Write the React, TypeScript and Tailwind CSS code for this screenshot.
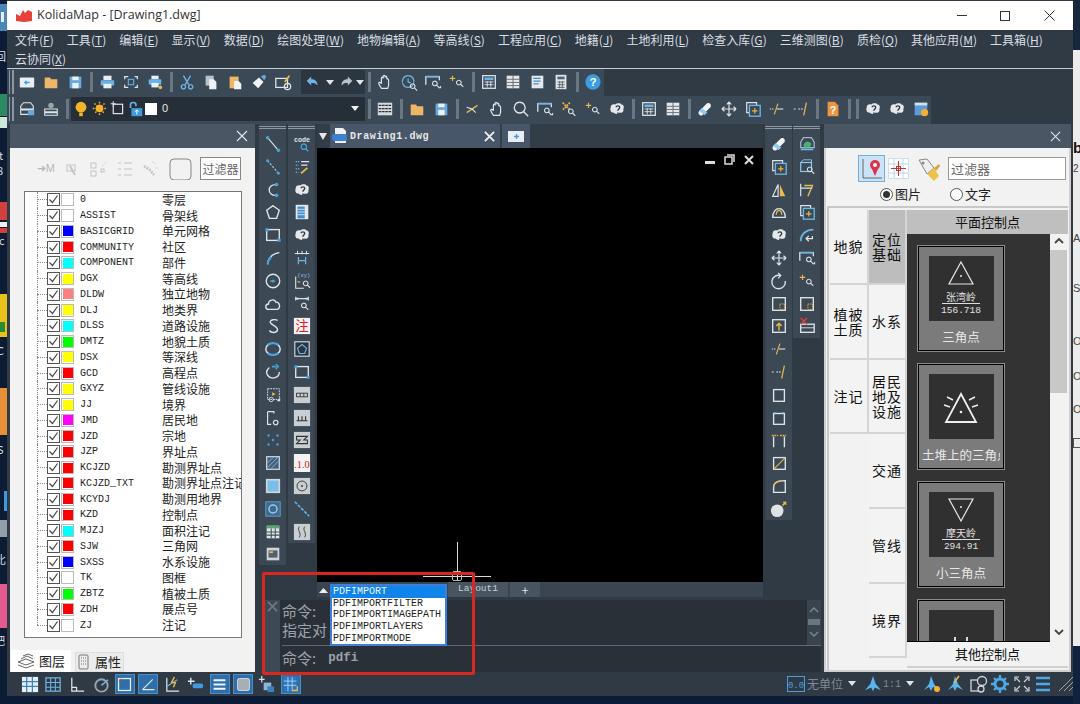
import React from "react";

const B = "#43a5e0";
const W = "#dfe5ea";
const Y = "#e8b84a";
const G = "#9aa5ae";

const P = { fill: "none", stroke: W, strokeWidth: 1.5 } as const;

const cloudQ = (
  <>
    <path d="M3 8c0-3 3-4 5-3 2-2 6-2 7 0 3 0 3 4 2 5 1 3-2 5-4 4-2 2-5 2-7 0-3 0-4-3-3-6z" fill="#e6e9ec" />
    <path d="M9 8c0-2 4-2 4 0s-2 2-2 4M11 14v1.5" fill="none" stroke="#2f3a46" strokeWidth="1.5" />
  </>
);

const zoomGlass = (x: number, y: number) => (
  <path d={`M${x} ${y}a2.6 2.6 0 1 0 .1 0M${x + 2} ${y + 4.5}l3 3`} fill="none" stroke={W} strokeWidth="1.2" />
);

const icons: Record<string, React.ReactNode> = {
  newf: <><rect x="2" y="5" width="16" height="11" rx="1" fill="#e9eef2" /><path d="M8 10.5h5M9.5 8.5l-2 2 2 2" stroke={B} strokeWidth="1.5" fill="none" /></>,
  folder: <path d="M3 5h6l1 2h7v10H3z" fill="#eeb667" />,
  save: <><rect x="4" y="4" width="13" height="13" fill="#67a9dd" /><rect x="7" y="4" width="7" height="4" fill="#eaf2f8" /><rect x="7" y="11" width="7" height="6" fill="#eaf2f8" /></>,
  print: <><rect x="6" y="3" width="9" height="5" fill="#e9eef2" /><rect x="3" y="8" width="15" height="6" rx="1" fill="#67b2e6" /><rect x="6" y="12" width="9" height="5" fill="#e9eef2" /></>,
  frame: <><path d="M3 7V4h4M14 4h3v3M17 13v3h-3M7 16H3v-3" fill="none" stroke={W} strokeWidth="1.4" /><rect x="7" y="7" width="6" height="6" fill="none" stroke="#67b2e6" strokeWidth="1.2" /></>,
  print2: <><rect x="6" y="3" width="8" height="4" fill="#e9eef2" /><rect x="3" y="7" width="14" height="6" rx="1" fill="#67b2e6" /><rect x="6" y="11" width="8" height="5" fill="#e9eef2" /><circle cx="16" cy="16" r="2" fill={Y} /></>,
  cut: <path d="M6 3l6 10M14 3L8 13M6 13a2.4 2.4 0 1 0 .1 0M14 13a2.4 2.4 0 1 0 .1 0" fill="none" stroke="#6eb5e5" strokeWidth="1.5" />,
  copy: <><rect x="4" y="3" width="9" height="11" fill="#b8c2ca" /><path d="M8 7h5l3 3v8H8z" fill="#f0f3f5" /></>,
  paste: <><rect x="4" y="4" width="10" height="13" fill="#eeb667" /><path d="M9 9h5l3 3v6H9z" fill="#f0f3f5" /></>,
  brush: <><path d="M3 11l7-6 5 5-6 7z" fill="#f0f3f5" /><path d="M12 4l4-2 2 2-2 4z" fill="#67a9dd" /></>,
  match: <><rect x="2" y="6" width="13" height="10" fill="none" stroke={W} strokeWidth="1.4" /><circle cx="15" cy="15" r="3.5" fill="none" stroke={W} strokeWidth="1.4" /><path d="M12 10l5-7" stroke={Y} strokeWidth="2" /></>,
  undo: <><path d="M8 4L3 9l5 5V11c3 0 5 0 7 3 0-5-3-7-7-7z" fill="#6eb5e5" /></>,
  redo: <path d="M12 4l5 5-5 5V11c-3 0-5 0-7 3 0-5 3-7 7-7z" fill="#b9c2ca" />,
  hand: <path d="M6 17c-2-3-3-5-3-6s2-1 3 1V6c0-2 2-2 2 0V4c0-2 2-2 2 0v1c0-2 2-2 2 0v2c0-1 2-1 2 1v5c0 2-1 3-1 4z" fill="none" stroke={W} strokeWidth="1.3" />,
  clockz: <><path d="M9 3a6.5 6.5 0 1 0 .1 0M9 6v4l3 1" fill="none" stroke="#6eb5e5" strokeWidth="1.4" />{zoomGlass(14, 12)}</>,
  rectz: <><path d="M2 13V4h15v4" fill="none" stroke={W} strokeWidth="1.4" /><path d="M2 4h15" stroke="#6eb5e5" strokeWidth="2" />{zoomGlass(12, 9)}<path d="M16 17h3v-3z" fill={W} /></>,
  starz: <><path d="M5 3v6M2 6h6" stroke={Y} strokeWidth="1.3" />{zoomGlass(12, 8)}</>,
  calc1: <><rect x="3" y="3" width="14" height="14" fill="none" stroke={W} strokeWidth="1.4" /><rect x="5" y="5" width="10" height="3" fill="#6eb5e5" /><path d="M5 10h10M5 13h10M8 9v7M12 9v7" stroke={W} strokeWidth="1" /></>,
  table: <><rect x="3" y="3" width="14" height="14" fill="#e5e8eb" /><path d="M3 7h14M3 10.5h14M3 14h14M10 3v14" stroke="#5d6872" strokeWidth="1" /></>,
  sheet: <><rect x="4" y="3" width="13" height="14" fill="#e5e8eb" /><path d="M6 6h8M6 9h8M6 12h6" stroke="#3f8ccb" strokeWidth="1.3" /></>,
  calc2: <><rect x="4" y="2" width="12" height="16" fill="#dfe5ea" /><rect x="6" y="4" width="8" height="3" fill="#56636e" /><path d="M6 10h8M6 13h8M6 16h8M8.5 9v8M11.5 9v8" stroke="#56636e" strokeWidth="1" /></>,
  help: <><circle cx="10" cy="10" r="8.5" fill="#3e9be0" /><text x="10" y="14.5" fontSize="13" fontWeight="700" textAnchor="middle" fill="#fff" fontFamily="Liberation Sans">?</text></>,
  layers1: <><path d="M3 7l3-4h8l3 4v3H3zM3 11h14v5H3z" fill="none" stroke={W} strokeWidth="1.2" /><rect x="11" y="11" width="7" height="6" fill="#67a9dd" /></>,
  layers2: <><circle cx="10" cy="6" r="3" fill={G} /><path d="M3 10h14v3H3zM3 14h14v3H3z" fill="none" stroke={W} strokeWidth="1.2" /></>,
  bulb: <><circle cx="10" cy="8" r="6" fill="#f3b42b" /><rect x="8" y="14" width="4" height="4" fill="#f3b42b" /></>,
  sun: <><circle cx="10" cy="10" r="4.5" fill="#f3b42b" /><path d="M10 2v16M2 10h16M4 4l12 12M16 4L4 16" stroke="#f3b42b" strokeWidth="1.6" strokeDasharray="2 1.4" /></>,
  newbox: <><rect x="5" y="5" width="11" height="11" fill="none" stroke={W} strokeWidth="1.4" /><path d="M5 1.5v6M2 4.5h6" stroke={W} strokeWidth="1.2" /></>,
  lock: <><path d="M5 9V5c0-3 6-3 6 0v2" fill="none" stroke="#6eb5e5" strokeWidth="1.8" /><rect x="6" y="9" width="12" height="9" fill="#3e9be0" /><path d="M12 11v5M10 13l2-2 2 2" stroke="#fff" strokeWidth="1.1" fill="none" /></>,
  lines: <><rect x="2" y="3" width="16" height="14" fill="#d5dade" /><path d="M3 6h14M3 9.5h14M3 13h14" stroke="#333" strokeWidth="1.4" strokeDasharray="3 .6" /></>,
  slashy: <><path d="M3 14L15 6" stroke={Y} strokeWidth="1.5" /><path d="M3 8l6 2 4 4" fill="none" stroke={W} strokeWidth="1.2" /></>,
  zoom: <path d="M8.5 2.5a6 6 0 1 0 .1 0M13 13l5 5" fill="none" stroke={W} strokeWidth="1.5" />,
  xz: <><path d="M3 3l8 8M11 3l-8 8" stroke={Y} strokeWidth="2" strokeDasharray="2 1" />{zoomGlass(12, 10)}</>,
  qcloud: cloudQ,
  grid2: <><rect x="2" y="3" width="16" height="14" fill="none" stroke={W} strokeWidth="1.4" /><rect x="3" y="4" width="14" height="3" fill="#67b2e6" /><path d="M3 10h14M3 13.5h14M8 7v10M13 7v10" stroke="#67b2e6" strokeWidth="1.2" /></>,
  eraser: <><path d="M3 13l9-9c2-2 6 1 4 4l-9 9c-2 1-5-1-4-4z" fill="#f0f4f7" /><path d="M3.500 12l3-3 6 5-3 3z" fill="#8fcaf0" /></>,
  move: <path d="M10 2v16M2 10h16M10 2L7.5 5M10 2l2.5 3M10 18l-2.5-3M10 18l2.5-3M2 10l3-2.5M2 10l3 2.5M18 10l-3-2.5M18 10l-3 2.5" fill="none" stroke={W} strokeWidth="1.3" />,
  copyp: <><path d="M6 14H3V3h11v3" fill="none" stroke={W} strokeWidth="1.3" /><rect x="6" y="6" width="12" height="12" fill="none" stroke="#6eb5e5" strokeWidth="1.5" /><path d="M12 9v6M9 12h6" stroke={Y} strokeWidth="1.3" /></>,
  ext1: <><path d="M7 16L11 4" stroke={Y} strokeWidth="1.3" /><path d="M2 10h5" stroke={W} strokeWidth="1.2" strokeDasharray="1.500 1" /><path d="M10 10h7" stroke={W} strokeWidth="1.2" /></>,
  ext2: <><path d="M2 10h3M7 10h6" stroke={W} strokeWidth="1.2" strokeDasharray="2 1" /><path d="M16 3l-3 14" stroke={Y} strokeWidth="1.4" /></>,
  qdoc: <><path d="M4 2h8l4 4v12H4z" fill="#ec9440" /><text x="10" y="15" fontSize="12" fontWeight="700" textAnchor="middle" fill="#fff" fontFamily="Liberation Sans">?</text></>,
  gear: <><rect x="3" y="3" width="14" height="14" fill="#5f9bd6" /><rect x="3" y="3" width="14" height="3" fill="#cfe2f1" /><circle cx="14" cy="14" r="4" fill="#f2b132" /></>,
  line: <><path d="M4 3l12 14" stroke={W} strokeWidth="1.2" /><circle cx="4" cy="3" r="2" fill={B} /><circle cx="16" cy="17" r="2" fill={B} /></>,
  dline: <><path d="M4 3l12 14" stroke="#8fcaf0" strokeWidth="1.4" strokeDasharray="2.5 1.5" /><circle cx="4" cy="3" r="1.6" fill={B} /><circle cx="16" cy="17" r="1.6" fill={B} /></>,
  cc: <><path d="M14 4c-11-1-11 13 0 12" {...P} /><circle cx="14" cy="4" r="2" fill={B} /><circle cx="14" cy="16" r="2" fill={B} /></>,
  penta: <path d="M10 3l7 5-3 9H6L3 8z" {...P} />,
  rect: <><rect x="3" y="4" width="14" height="12" {...P} /><rect x="1.5" y="2.5" width="3.5" height="3.5" fill={B} /><rect x="15" y="14" width="3.5" height="3.5" fill={B} /></>,
  arc: <><path d="M4 17C5 9 10 5 17 4" stroke={W} strokeWidth="1.5" fill="none" /><path d="M4 17C4.500 13 6 10.500 8 9" stroke={B} strokeWidth="2.400" fill="none" /></>,
  circle: <><circle cx="10" cy="10" r="7.5" {...P} /><path d="M7 10h5" stroke={B} strokeWidth="1.8" /><circle cx="10" cy="10" r="1.800" fill={B} /></>,
  cloud: <path d="M5 16c-4 0-4-6 0-6 0-5 7-6 8-2 5-1 6 8 1 8z" {...P} />,
  sss: <path d="M15 4c-2-2-9-1-8 2s8 4 8 8-7 4-9 1" fill="none" stroke={W} strokeWidth="1.600" />,
  ell: <><ellipse cx="10" cy="10" rx="8" ry="6.500" fill="none" stroke={W} strokeWidth="1.600" /><path d="M4 5.500C6 3 14 3 16 5.500M4 14.500C6 17 14 17 16 14.500" fill="none" stroke={B} strokeWidth="2.400" /></>,
  earc: <><path d="M6 5C-1 11 6 19 13 16c3-1 4-4 4-6" {...P} /><path d="M9 4l5 0" stroke={B} strokeWidth="2" /><path d="M13 1l3 3-3 3" stroke={B} strokeWidth="1.500" fill="none" /></>,
  ins: <><rect x="4" y="3" width="13" height="12" fill="#404c58" stroke={W} strokeDasharray="2 1" /><circle cx="8" cy="15" r="2.400" fill="none" stroke={W} /><path d="M9 7l4 2-4 2z" fill={Y} /><path d="M14 17h4v-4z" fill={W} /></>,
  blk: <><path d="M4 3h7v2M4 3v14h4" fill="none" stroke={W} strokeWidth="1.300" /><circle cx="13" cy="15" r="2.500" fill="none" stroke={W} strokeWidth="1.300" /></>,
  dots: <g fill={B}><circle cx="5" cy="5" r="1.300" /><circle cx="15" cy="5" r="1.300" /><circle cx="10" cy="10" r="1.300" /><circle cx="5" cy="15" r="1.300" /><circle cx="15" cy="15" r="1.300" /></g>,
  hatch: <><rect x="3" y="3" width="14" height="14" fill="#43627e" stroke="#cfd6dc" strokeWidth="1.400" /><path d="M4 10l6-6M4 15L15 4M8 16l8-8" stroke="#8fb6d6" strokeWidth="1" /></>,
  grad: <><rect x="3" y="3" width="14" height="14" fill="#79bfe9" stroke="#cfd6dc" strokeWidth="1.800" /></>,
  region: <><rect x="2" y="2" width="16" height="16" fill="#3c6a92" stroke="#5d9fd0" /><circle cx="10" cy="10" r="4.500" fill="none" stroke="#a6c8e0" strokeWidth="1.600" /></>,
  tbl: <><rect x="3" y="3" width="14" height="14" fill="#e5e8eb" /><rect x="3" y="3" width="14" height="3" fill="#53a86a" /><path d="M3 10h14M3 13.500h14M8 6v11M12.500 6v11" stroke="#424d57" strokeWidth="1.200" /></>,
  img: <><rect x="3" y="3" width="14" height="14" fill="#cfd5da" /><rect x="5" y="6" width="10" height="8" fill="#55606a" /><path d="M6 8h4" stroke={Y} strokeWidth="2" /></>,
  code: <><text x="10" y="8" fontSize="7.500" fontWeight="700" textAnchor="middle" fill={W} fontFamily="Liberation Mono">code</text><path d="M12 10a3 3 0 1 0 .1 0M14 15l3 3" fill="none" stroke={B} strokeWidth="1.400" /></>,
  mtext: <><path d="M9 4h9M9 8h7" stroke={W} strokeWidth="1.300" /><path d="M3 4h4M3 8h3M3 12h4M3 16h3" stroke="#6eb5e5" strokeWidth="1.300" strokeDasharray="1.500 1" /><path d="M9 17l7-6" stroke={Y} strokeWidth="2" /></>,
  hatchy: <><rect x="3" y="2" width="14" height="16" fill="#e6e9ec" /><rect x="5" y="4" width="8" height="13" fill="#3f8ccb" /><path d="M5 7h8M5 10h8M5 13h8" stroke="#e6e9ec" /></>,
  hdim: <><path d="M2 5h16M5 2v4M10 2v4M15 2v4" stroke={W} strokeWidth="1.100" fill="none" /><path d="M6 9v8M14 9v8M6 13h8" stroke="#6eb5e5" strokeWidth="1.400" /></>,
  xy: <><text x="12" y="6" fontSize="6" textAnchor="middle" fill="#8fcaf0" fontFamily="Liberation Mono">(xy)</text><path d="M3 5v13h9" stroke={W} strokeWidth="1.200" fill="none" /><path d="M5 11h3" stroke={Y} strokeWidth="1.400" />{zoomGlass(14, 10)}</>,
  dimz: <><path d="M3 4h14M3 2v4M17 2v4" stroke={W} strokeWidth="1.200" /><rect x="3" y="3" width="3" height="2" fill={W} /><rect x="14" y="3" width="3" height="2" fill={W} />{zoomGlass(12, 9)}</>,
  zhu: <><rect x="1" y="1" width="18" height="18" fill="#f2f2f2" /><text x="10" y="15.500" fontSize="15" textAnchor="middle" fill="#e02020" fontFamily="Noto Sans CJK SC">注</text></>,
  polyb: <><rect x="2" y="2" width="16" height="16" fill="#2b3540" stroke="#cfd6dc" strokeWidth="1.300" /><path d="M10 5l5 4-2 6H7L5 9z" fill="none" stroke="#6eb5e5" strokeWidth="1.300" /></>,
  ts1: <><rect x="1" y="1" width="18" height="18" fill="#c9ced2" /><rect x="4" y="8" width="12" height="4" fill="none" stroke="#333" /><path d="M8 8v4M12 8v4" stroke="#333" /></>,
  ts2: <><rect x="1" y="1" width="18" height="18" fill="#c9ced2" /><path d="M4 13h12M6 8v5M10 8v5M14 8v5" stroke="#333" strokeWidth="1.200" /></>,
  ts3: <><rect x="1" y="1" width="18" height="18" fill="#c9ced2" /><path d="M4 6h12l-4 4h4v4H4l4-4H4z" fill="none" stroke="#333" strokeWidth="1.200" /></>,
  ten: <><rect x="1" y="0" width="18" height="20" fill="#f2f2f2" /><text x="10" y="15" fontSize="11.500" textAnchor="middle" fill="#e02020" fontFamily="Liberation Serif">.1.0</text></>,
  tc: <><rect x="1" y="1" width="18" height="18" fill="#c9ced2" /><circle cx="10" cy="10" r="5.500" fill="none" stroke="#333" /><circle cx="10" cy="10" r="1" fill="#333" /></>,
  diag: <path d="M2 2l16 16" stroke="#5eb5ef" strokeWidth="1.800" strokeDasharray="3.500 1.500" />,
  ssw: <><rect x="1" y="1" width="18" height="18" fill="#c9ced2" /><path d="M7 4c-3 4 3 7 0 12M13 4c-3 4 3 7 0 12" fill="none" stroke="#333" /></>,
  mirror: <><path d="M9 4v13H3z" fill="none" stroke={W} strokeWidth="1.300" /><path d="M11 4v13h6z" fill={Y} /></>,
  offset: <><path d="M3 16c0-13 14-13 14 0z" fill="none" stroke={W} strokeWidth="1.500" /><path d="M7 13c0-6 6-6 6 0" fill="none" stroke={Y} strokeWidth="1.500" /></>,
  rot: <><path d="M12 4a7.500 7.500 0 1 0 5 6" {...P} /><path d="M9 1l3 3-3 3" stroke={W} strokeWidth="1.300" fill="none" /></>,
  rsc: <><rect x="3" y="3" width="14" height="14" {...P} /><path d="M11 10h5v6h-5z" fill="none" stroke={Y} strokeDasharray="1.500 1" /></>,
  upb: <><rect x="3" y="3" width="14" height="14" {...P} /><path d="M10 15V7M7 10l3-3 3 3" stroke={Y} strokeWidth="1.600" fill="none" /></>,
  sq: <rect x="4" y="4" width="12" height="13" {...P} />,
  sqd: <><rect x="4" y="5" width="12" height="12" {...P} /><path d="M4 4h3M13 4h3" stroke={B} strokeWidth="1.500" /></>,
  trim: <><path d="M4 18V6M16 18V6" stroke={W} strokeWidth="1.500" /><path d="M2 5h7M11 5h7" stroke={Y} strokeWidth="1.500" strokeDasharray="2 1" /></>,
  cham: <><rect x="4" y="4" width="13" height="13" {...P} /><path d="M4 17L17 4" stroke={Y} strokeWidth="1.200" /></>,
  fillet: <><path d="M4 17V11c0-4 4-7 13-7v13z" {...P} /><path d="M4 11c0-4 4-7 9-7" stroke={Y} strokeWidth="1.200" fill="none" /></>,
  bomb: <><circle cx="8" cy="12" r="7" fill="#dfe3e6" /><path d="M14 6l4-4M15 2l3 3" stroke={Y} strokeWidth="1.800" /></>,
  car: <><path d="M3 14V8l3-5h9l3 5v6z" fill="none" stroke="#9fb7c8" strokeWidth="1.400" /><path d="M6 11c2-5 7-5 9-1l-2 4H7z" fill="#4cae70" /><path d="M3 16h14" stroke="#6eb5e5" strokeWidth="2" /></>,
  boxz: <><rect x="3" y="5" width="12" height="10" fill="none" stroke="#8fcaf0" strokeWidth="1.300" /><path d="M3 5l3-3h9v3" fill="none" stroke="#8fcaf0" strokeWidth="1" />{zoomGlass(13, 10)}</>,
  dim: <><path d="M3 3v14M3 8h13" stroke={W} strokeWidth="1.300" /><path d="M7 5l9 0-5 12" stroke={Y} strokeWidth="1.600" fill="none" /></>,
  arca: <><path d="M3 17C3 9 9 4 17 4" stroke="#6eb5e5" strokeWidth="2" fill="none" /><path d="M16 11v3H9M12 11l-3 3 3 3" stroke={W} strokeWidth="1.400" fill="none" /></>,
  rem: <><rect x="3" y="8" width="15" height="9" {...P} /><path d="M3 12h15" stroke={W} /><path d="M3 1l7 7M10 1L3 8" stroke="#e04040" strokeWidth="1.500" /></>,
  gridb: <><rect x="1" y="2" width="17" height="16" fill="#e4eff7" /><path d="M1 7h17M1 12h17M6 2v16M12 2v16" stroke="#3a82c0" strokeWidth="1.300" /></>,
  gridt: <><rect x="2" y="3" width="15" height="14" fill="none" stroke="#6eb5e5" strokeWidth="1.300" /><path d="M2 8h15M2 13h15M7 3v14M12 3v14" stroke="#6eb5e5" strokeWidth="1.100" /></>,
  ortho: <path d="M4 3v14h13M4 13h5v4" fill="none" stroke={W} strokeWidth="1.300" />,
  polar: <><circle cx="10" cy="11" r="6.500" fill="none" stroke={G} strokeWidth="2" /><path d="M10 11l7-6" stroke="#6eb5e5" strokeWidth="1.600" /></>,
  osnap: <><rect x="3" y="3" width="14" height="14" fill="none" stroke="#e6edf2" strokeWidth="1.500" /><path d="M3 6h3V3" stroke="#d94040" fill="none" /></>,
  track: <path d="M3 16L15 4M3 16h14" fill="none" stroke="#dfe5ea" strokeWidth="1.400" />,
  dyn: <><path d="M4 3v14h13" stroke={W} strokeWidth="1.300" fill="none" /><path d="M4 12L15 5" stroke="#6eb5e5" strokeWidth="1.300" /><path d="M12 2L9 8h4l-2 5" stroke={Y} strokeWidth="1.500" fill="none" /></>,
  plusb: <><path d="M5 3v7M2 6.500h7" stroke={W} strokeWidth="1.500" /><rect x="7" y="9" width="11" height="5" rx="2" fill="#3e9be0" /></>,
  lw: <path d="M3 5h14M3 10h14M3 15h14" stroke="#f0f4f7" strokeWidth="2.500" />,
  tp: <><rect x="3" y="3" width="14" height="14" rx="2" fill="#a8aeb3" stroke="#dfe5ea" /></>,
  sel: <><path d="M5 1v7M2 4.500h6" stroke={W} strokeWidth="1.300" /><rect x="7" y="8" width="8" height="8" fill="#8fb6d6" /><rect x="11" y="12" width="7" height="6" fill="#3e7fb5" /></>,
  book: <><rect x="2" y="1" width="15" height="17" fill="#2f78bf" /><path d="M2 6h15M2 11h15M7 1v17M12 1v17" stroke="#b6d7ef" strokeWidth="1" /><path d="M12 17h6v-5" stroke={Y} strokeWidth="1.600" fill="none" /></>,
  plane: <path d="M10 1l3 9 6 7-7-3-2 4-2-4-7 3 6-7z" fill="#5ab4ee" />,
  planeb: <><path d="M9 2l3 8 5 6-6-3-2 4-2-4-5 3 5-6z" fill="#5ab4ee" /><circle cx="15" cy="15" r="3" fill="#f2b132" /></>,
  planex: <><path d="M9 2l3 8 5 6-6-3-2 4-2-4-5 3 5-6z" fill="#5ab4ee" /><path d="M13 2L8 9" stroke={Y} strokeWidth="1.600" /></>,
  wsp: <><rect x="2" y="6" width="10" height="11" fill="none" stroke="#cfd6dc" strokeWidth="1.300" /><circle cx="13" cy="7" r="4.500" fill="#2f3a46" stroke="#cfd6dc" strokeWidth="1.300" /><circle cx="12" cy="15" r="3" fill="#2f3a46" stroke="#cfd6dc" strokeWidth="1.300" /></>,
  cog: <><circle cx="10" cy="10" r="5" fill="none" stroke="#4fa8e6" strokeWidth="3" /><path d="M10 1v4M10 15v4M1 10h4M15 10h4M4 4l2.500 2.500M13.500 13.500L16 16M16 4l-2.500 2.500M6.500 13.500L4 16" stroke="#4fa8e6" strokeWidth="2.400" /></>,
  clean: <path d="M3 7V3h4M13 3h4v4M17 13v4h-4M7 17H3v-4M4 4l4 4M16 4l-4 4M16 16l-4-4M4 16l4-4" fill="none" stroke="#cfd6dc" strokeWidth="1.200" />,
  burger: <path d="M3 4h14M3 10h14M3 16h14" stroke="#4fa8e6" strokeWidth="2.400" />,
};

function I({ n, s = 20, className = "" }: { n: string; s?: number; className?: string }) {
  return (
    <svg width={s} height={s} viewBox="0 0 20 20" className={"shrink-0 " + className}>
      {icons[n]}
    </svg>
  );
}

const Sep = () => (
  <span className="flex w-2 shrink-0 items-center justify-center">
    <span className="h-[20px] w-[3px] bg-[#6a7783]" />
  </span>
);

const Tool = ({ n }: { n: string }) => (
  <span className="flex w-6 shrink-0 items-center justify-center">
    <I n={n} s={18} />
  </span>
);

const Grip = () => (
  <span className="flex w-[7px] shrink-0 items-center gap-[2px] pl-[1px]">
    <span className="h-[24px] w-[1px] bg-[#8a96a1]" />
    <span className="h-[24px] w-[2px] bg-[#8a96a1]" />
  </span>
);

function Tools({ list }: { list: string[] }) {
  return (
    <>
      {list.map((n, i) => (n === "|" ? <Sep key={i} /> : <Tool key={i} n={n} />))}
    </>
  );
}

function Dock({ list, w, h, className = "" }: { list: string[]; w: string; h: string; className?: string }) {
  return (
    <div className={`flex shrink-0 flex-col items-center bg-[#3c4854] ${w} ${h} ${className}`}>
      <div className="mt-[2px] h-[3px] w-full shrink-0 border-y border-[#8a96a1]" />
      <div className="mt-[6px] flex flex-col items-center gap-[4.8px]">
        {list.map((n, i) => (
          <I key={i} n={n} s={18} />
        ))}
      </div>
    </div>
  );
}

const menu: [string, string][] = [
  ["文件", "F"], ["工具", "T"], ["编辑", "E"], ["显示", "V"], ["数据", "D"], ["绘图处理", "W"],
  ["地物编辑", "A"], ["等高线", "S"], ["工程应用", "C"], ["地籍", "J"], ["土地利用", "L"], ["检查入库", "G"],
  ["三维测图", "B"], ["质检", "Q"], ["其他应用", "M"], ["工具箱", "H"],
];

const M = ({ t, k }: { t: string; k: string }) => (
  <span className="whitespace-nowrap">
    {t}(<span className="underline">{k}</span>)
  </span>
);

const layers: [string, string, string][] = [
  ["0", "#ffffff", "零层"],
  ["ASSIST", "#ffffff", "骨架线"],
  ["BASICGRID", "#0000ff", "单元网格"],
  ["COMMUNITY", "#ff0000", "社区"],
  ["COMPONENT", "#00ffff", "部件"],
  ["DGX", "#ffff00", "等高线"],
  ["DLDW", "#ff8080", "独立地物"],
  ["DLJ", "#ffff00", "地类界"],
  ["DLSS", "#00ffff", "道路设施"],
  ["DMTZ", "#00ff00", "地貌土质"],
  ["DSX", "#ffff00", "等深线"],
  ["GCD", "#ff0000", "高程点"],
  ["GXYZ", "#ffff00", "管线设施"],
  ["JJ", "#ffff00", "境界"],
  ["JMD", "#ff00ff", "居民地"],
  ["JZD", "#ff0000", "宗地"],
  ["JZP", "#ff0000", "界址点"],
  ["KCJZD", "#ff0000", "勘测界址点"],
  ["KCJZD_TXT", "#ff0000", "勘测界址点注记"],
  ["KCYDJ", "#ff0000", "勘测用地界"],
  ["KZD", "#ff0000", "控制点"],
  ["MJZJ", "#00ffff", "面积注记"],
  ["SJW", "#ff0000", "三角网"],
  ["SXSS", "#0000ff", "水系设施"],
  ["TK", "#ffffff", "图框"],
  ["ZBTZ", "#00ff00", "植被土质"],
  ["ZDH", "#ff0000", "展点号"],
  ["ZJ", "#ffffff", "注记"],
];

function LayerRow({ name, color, cn, last }: { name: string; color: string; cn: string; last: boolean }) {
  return (
    <div className="relative flex h-[15.75px] items-center">
      <span className={`absolute left-[12px] top-0 w-0 border-l border-dotted border-[#888] ${last ? "h-[8px]" : "h-full"}`} />
      <span className="ml-[12px] w-[10px] shrink-0 border-t border-dotted border-[#888]" />
      <span className="flex h-[13px] w-[13px] shrink-0 items-center justify-center border border-[#555] bg-white">
        <svg width="11" height="11" viewBox="0 0 11 11">
          <path d="M1.500 5.500l3 3 5-7" fill="none" stroke="#444" strokeWidth="1.200" />
        </svg>
      </span>
      <span className="ml-[1px] flex h-[13px] w-[13px] shrink-0 items-center justify-center border border-[#bbb] bg-white">
        <span className="h-[10px] w-[10px]" style={{ background: color }} />
      </span>
      <span className="ml-[6px] w-[82px] shrink-0 font-['Liberation_Mono',monospace] text-[10px] text-[#222]">{name}</span>
      <span className="whitespace-nowrap text-[12px] leading-[14px] text-[#222]">{cn}</span>
    </div>
  );
}

function LeftPanel() {
  return (
    <div className="flex h-[548px] w-[245px] shrink-0 flex-col">
      <div className="flex h-[24px] items-center justify-end bg-[#4a5663] pr-[7px]">
        <svg width="12" height="12" viewBox="0 0 12 12"><path d="M1 1l10 10M11 1L1 11" stroke="#e5e9ec" strokeWidth="1.100" /></svg>
      </div>
      <div className="flex min-h-0 flex-1 flex-col bg-[#f2f2f2] px-[14px]">
        <div className="flex h-[43px] items-center justify-end pb-[2px] text-[#b8b8b8]">
          <span className="mr-[9px] font-['Liberation_Sans',sans-serif] text-[11px]">➜M</span>
          <svg width="130" height="22" viewBox="0 0 130 22" className="mr-[6px]" stroke="#c4c4c4" fill="none">
            <rect x="3" y="7" width="8" height="6" /><path d="M6 8l5 9" strokeWidth="2" />
            <rect x="27" y="5" width="5" height="5" /><rect x="27" y="13" width="5" height="5" /><rect x="37" y="11" width="3" height="3" /><path d="M38 8l5-4" strokeDasharray="1 1" />
            <path d="M54 5h3M54 11h3M54 17h3M60 5h8M60 11h8M60 17h8" />
            <path d="M80 8l6 4 4 5" strokeWidth="2.500" strokeDasharray="2 1" /><path d="M88 4l4 2M91 10l4 0" strokeDasharray="1 1" />
            <rect x="106" y="1" width="21" height="21" rx="4" stroke="#888" />
          </svg>
          <span className="flex h-[23px] w-[41px] items-center justify-center border border-[#888] bg-white text-[12px] text-[#666]">过滤器</span>
        </div>
        <div className="h-[447px] w-[218px] overflow-hidden border border-[#777] bg-white">
          {layers.map((l, i) => (
            <LayerRow key={l[0]} name={l[0]} color={l[1]} cn={l[2]} last={i === layers.length - 1} />
          ))}
        </div>
        <div className="h-[10px]" />
      </div>
      <div className="flex h-[22px] items-end bg-[#f2f2f2] pl-[1px]">
        <span className="flex h-[22px] w-[60px] items-center justify-center gap-[4px] bg-white text-[13px] text-[#222]">
          <svg width="18" height="16" viewBox="0 0 18 16" fill="none" stroke="#666"><path d="M1 9l8-3 8 3-8 3zM1 12l8 3 8-3M4 6l6-3 6 3M6 3l5-2 5 2" /></svg>
          图层
        </span>
        <span className="ml-[4px] flex h-[20px] w-[49px] items-center justify-center gap-[6px] border border-[#ddd] bg-[#ececec] text-[13px] text-[#222]">
          <svg width="11" height="16" viewBox="0 0 11 16" fill="none" stroke="#777"><rect x="1" y="1" width="9" height="14" rx="1" /><path d="M3 4h5M3 7h5M3 10h5" strokeDasharray="1 1" /></svg>
          属性
        </span>
      </div>
    </div>
  );
}

const tri1 = (
  <svg width="30" height="28" viewBox="0 0 30 28"><path d="M15 2L27 24H3z" fill="none" stroke="#e8e8e8" strokeWidth="1.200" /><circle cx="15" cy="16" r="1" fill="#e8e8e8" /></svg>
);
const tri2 = (
  <svg width="44" height="42" viewBox="0 0 44 42"><path d="M22 8L37 36H7z" fill="none" stroke="#eee" strokeWidth="1.800" /><circle cx="22" cy="26" r="1.300" fill="#eee" /><path d="M14 14l-6-3M11 21l-6-2M30 14l6-3M33 21l6-2" stroke="#eee" strokeWidth="1.400" /></svg>
);
const tri3 = (
  <svg width="30" height="28" viewBox="0 0 30 28"><path d="M3 3H27L15 25z" fill="none" stroke="#e8e8e8" strokeWidth="1.200" /><circle cx="15" cy="11" r="1" fill="#e8e8e8" /></svg>
);
const tri4 = (
  <svg width="44" height="42" viewBox="0 0 44 42"><path d="M7 24H37L22 48z" fill="none" stroke="#eee" strokeWidth="1.800" /><path d="M16 24v-9M28 24v-9" stroke="#eee" strokeWidth="1.800" /><circle cx="22" cy="33" r="1.300" fill="#eee" /></svg>
);

function Card({ pic, top, bottom, label }: { pic: React.ReactNode; top?: string; bottom?: string; label: string }) {
  return (
    <div className="ml-[10px] flex h-[107px] w-[88px] shrink-0 flex-col items-center border border-[#8a8a8a] bg-[#7b7b7b] outline outline-1 -outline-offset-2 outline-black">
      <div className="mt-[10px] flex h-[65px] w-[65px] shrink-0 flex-col items-center justify-center bg-[#303030] text-[#e0e0e0]">
        {pic}
        {top && (
          <>
            <span className="mt-[3px] w-[38px] border-b border-[#ddd] text-center text-[10px] leading-[12px]">{top}</span>
            <span className="font-['Liberation_Mono',monospace] text-[9.500px] leading-[13px]">{bottom}</span>
          </>
        )}
      </div>
      <div className="mt-[8px] w-[78px] overflow-hidden whitespace-nowrap text-center text-[12.500px] leading-[16px] text-[#e8e8e8]">{label}</div>
    </div>
  );
}

function Tab1({ children, h, active = false }: { children: React.ReactNode; h: string; active?: boolean }) {
  return (
    <div className={`flex shrink-0 items-center justify-center border-b-2 border-r-2 border-[#d5d5d5] text-center text-[14px] leading-[15px] tracking-[1px] text-[#111] ${h} ${active ? "bg-[#bdbdbd]" : "bg-[#f3f3f3]"}`}>
      {children}
    </div>
  );
}

function RightPanel() {
  return (
    <div className="ml-[3px] flex h-[548px] w-[247px] shrink-0 flex-col">
      <div className="flex h-[24px] shrink-0 items-center justify-end bg-[#4a5663] pr-[10px]">
        <svg width="11" height="11" viewBox="0 0 12 12"><path d="M1 1l10 10M11 1L1 11" stroke="#e5e9ec" strokeWidth="1.100" /></svg>
      </div>
      <div className="flex min-h-0 flex-1 flex-col border-x-2 border-b-2 border-[#cfcfcf] bg-[#f2f2f2]">
        <div className="flex h-[58px] shrink-0 flex-col">
          <div className="mt-[7px] flex h-[27px] items-center">
            <span className="ml-[32px] flex h-[27px] w-[27px] items-center justify-center border border-[#6eaee0] bg-[#cbe3f6]">
              <svg width="24" height="24" viewBox="0 0 24 24" fill="none"><path d="M3 2v19h19" stroke="#666" /><circle cx="15" cy="8" r="5" fill="#e0304a" /><circle cx="15" cy="8" r="2" fill="#fff" /><path d="M12 12l3 7 3-7z" fill="#e0304a" /></svg>
            </span>
            <span className="ml-[3px] flex h-[21px] w-[21px] items-center justify-center border border-[#cde] bg-white">
              <svg width="19" height="19" viewBox="0 0 19 19" fill="none"><path d="M5 0v19M14 0v19M0 5h19M0 14h19" stroke="#bcd6ea" /><path d="M9.500 2v15M2 9.500h15" stroke="#c33" /><rect x="7.500" y="7.500" width="4" height="4" stroke="#c33" /></svg>
            </span>
            <span className="ml-[9px]">
              <svg width="22" height="24" viewBox="0 0 22 24"><path d="M1 3l8-1 7 9-7 6z" fill="#eee" stroke="#888" /><path d="M9 17l7-6 5 8-5 5z" fill="#ecc34a" /><path d="M16 11l5-4 1 2-4 5z" fill="#d9a52f" /><circle cx="5" cy="6" r="1.500" fill="#888" /></svg>
            </span>
            <span className="ml-[8px] flex h-[23px] w-[118px] items-center border border-[#999] bg-white pl-[2px] text-[13px] text-[#666]">过滤器</span>
          </div>
          <div className="mt-[3px] flex h-[18px] items-center text-[13px] text-[#222]">
            <span className="ml-[54px] flex h-[13px] w-[13px] items-center justify-center rounded-full border border-[#555] bg-white"><span className="h-[7px] w-[7px] rounded-full bg-[#333]" /></span>
            <span className="ml-[2px]">图片</span>
            <span className="ml-[29px] h-[13px] w-[13px] rounded-full border border-[#555] bg-white" />
            <span className="ml-[2px]">文字</span>
          </div>
        </div>
        <div className="mx-[1px] flex min-h-0 flex-1 border-l-2 border-t-2 border-[#c8c8c8] pl-[1px]">
          <div className="flex w-[39px] shrink-0 flex-col pt-[2px]">
            <Tab1 h="h-[75px]">地貌</Tab1>
            <Tab1 h="h-[75px]"><span>植被<br />土质</span></Tab1>
            <Tab1 h="h-[74px]">注记</Tab1>
          </div>
          <div className="flex w-[38px] shrink-0 flex-col pt-[2px]">
            <Tab1 h="h-[75px]" active><span>定位<br />基础</span></Tab1>
            <Tab1 h="h-[75px]">水系</Tab1>
            <Tab1 h="h-[74px]"><span>居民<br />地及<br />设施</span></Tab1>
            <Tab1 h="h-[75px]">交通</Tab1>
            <Tab1 h="h-[75px]">管线</Tab1>
            <Tab1 h="h-[74px]">境界</Tab1>
          </div>
          <div className="flex min-w-0 flex-1 flex-col pt-[2px]">
            <div className="flex h-[24px] shrink-0 items-center justify-center bg-[#bfbfbf] text-[13px] text-[#111]">平面控制点</div>
            <div className="flex h-[407px] shrink-0 overflow-hidden">
              <div className="flex w-[143px] flex-col gap-[11px] overflow-hidden bg-[#333333] pt-[11px]">
                <Card pic={tri1} top="张湾岭" bottom="156.718" label="三角点" />
                <Card pic={tri2} label="土堆上的三角点" />
                <Card pic={tri3} top="摩天岭" bottom="294.91" label="小三角点" />
                <Card pic={tri4} label="土堆上的小三角点" />
              </div>
              <div className="flex w-[17px] flex-col items-center bg-[#f2f2f2]">
                <svg width="12" height="16" viewBox="0 0 12 16" className="shrink-0"><path d="M2 9l4-4 4 4" fill="none" stroke="#444" strokeWidth="1.800" /></svg>
                <div className="h-[143px] w-full shrink-0 bg-[#c8c8c8]" />
                <div className="flex-1" />
                <svg width="12" height="16" viewBox="0 0 12 16" className="mb-[2px] shrink-0"><path d="M2 7l4 4 4-4" fill="none" stroke="#444" strokeWidth="1.800" /></svg>
              </div>
            </div>
            <div className="h-[1px] w-[143px] shrink-0 bg-black" />
            <div className="flex h-[24px] shrink-0 items-center justify-center bg-[#f2f2f2] text-[13px] text-[#111]">其他控制点</div>
            <div className="h-[2px] shrink-0 bg-[#d0d0d0]" />
          </div>
        </div>
      </div>
    </div>
  );
}

function Center() {
  return (
    <div className="relative flex h-[548px] w-[566px] shrink-0 flex-col">
      <div className="flex h-[476px] shrink-0">
        <Dock className="ml-[4px]" w="w-[27px]" h="h-[441px]" list={["line", "dline", "cc", "penta", "rect", "arc", "circle", "cloud", "sss", "ell", "earc", "ins", "blk", "dots", "hatch", "grad", "region", "tbl", "img"]} />
        <Dock className="ml-[2px]" w="w-[27px]" h="h-[419px]" list={["code", "mtext", "qcloud", "hatchy", "qcloud", "hdim", "xy", "dimz", "zhu", "polyb", "rect", "ts1", "ts2", "ts3", "ten", "tc", "diag", "ssw"]} />
        <div className="ml-[2px] flex w-[446px] shrink-0 flex-col">
          <div className="flex h-[24px] shrink-0 items-center bg-[#333d47]">
            <svg width="12" height="12" viewBox="0 0 12 12" className="shrink-0"><path d="M2 3h8l-4 7z" fill="#e8e8e8" /></svg>
            <span className="ml-[1px] flex h-[24px] w-[170px] items-center bg-[#48566a] pl-[1px]">
              <svg width="18" height="18" viewBox="0 0 18 18" className="shrink-0"><path d="M4 1h8l3 3v12H4z" fill="#eef2f5" /><rect x="1" y="7" width="15" height="7" rx="2" fill="#3e7fd0" /></svg>
              <span className="ml-[1px] font-['Liberation_Mono',monospace] text-[10px] font-bold tracking-[0.6px] text-[#e8e8e8]">Drawing1.dwg</span>
              <svg width="11" height="11" viewBox="0 0 12 12" className="ml-auto mr-[5px]"><path d="M1 1l10 10M11 1L1 11" stroke="#f0f0f0" strokeWidth="2" /></svg>
            </span>
            <span className="ml-[2px] flex h-[24px] w-[28px] items-center justify-center bg-[#48566a]"><svg width="16" height="12" viewBox="0 0 16 12"><rect x="0" y="1" width="16" height="11" fill="#e8eef2" /><path d="M6 6.500h5M8.500 4v5" stroke="#3e9be0" strokeWidth="1.300" /></svg></span>
          </div>
          <div className="relative h-[434px] shrink-0 bg-black">
            <div className="absolute right-[9px] top-[6px] flex items-center gap-[9px]">
              <span className="h-[3px] w-[10px] translate-y-[3px] bg-[#ddd]" />
              <svg width="11" height="11" viewBox="0 0 11 11" fill="none" stroke="#ddd" strokeWidth="1.500"><rect x="1" y="3" width="7" height="7" /><path d="M3 1h7v7" /></svg>
              <svg width="10" height="10" viewBox="0 0 10 10"><path d="M1 1l8 8M9 1L1 9" stroke="#ddd" strokeWidth="2" /></svg>
            </div>
          </div>
          <div className="flex h-[15px] shrink-0 bg-[#3a4551]">
            <span className="flex w-[13px] items-center justify-center"><svg width="11" height="8" viewBox="0 0 11 8"><path d="M1 7l4.500-5L10 7z" fill="#eee" /></svg></span>
            <span className="ml-[118px] flex w-[60px] items-center justify-center bg-[#48545f] font-['Liberation_Mono',monospace] text-[9.500px] text-[#c8d0d6]">Layout1</span>
            <span className="ml-[2px] flex w-[30px] items-center justify-center bg-[#48545f] text-[12px] text-[#e0e0e0]">+</span>
          </div>
        </div>
        <Dock className="ml-[2px]" w="w-[27px]" h="h-[396px]" list={["eraser", "copyp", "mirror", "offset", "qcloud", "move", "rot", "rsc", "upb", "ext1", "ext2", "sq", "sqd", "trim", "cham", "fillet", "bomb"]} />
        <Dock className="ml-[1px]" w="w-[27px]" h="h-[214px]" list={["car", "boxz", "dim", "copyp", "arca", "rectz", "starz", "rsc", "rem"]} />
      </div>
      <div className="ml-[9px] flex h-[72px] shrink-0">
        <div className="flex w-[16px] shrink-0 justify-center bg-[#3d4955] pt-[1px]">
          <svg width="11" height="11" viewBox="0 0 12 12"><path d="M1 1l10 10M11 1L1 11" stroke="#6d7883" strokeWidth="2" /></svg>
        </div>
        <div className="flex min-w-0 flex-1 flex-col bg-[#2a3038] pl-[2px]">
          <div className="flex h-[46px] shrink-0 border-b border-[#606a74]">
            <div className="flex-1 pt-[1px] text-[15px] leading-[19px] text-[#9aa3ab]">
              <div className="font-['Noto_Sans_CJK_SC',sans-serif]">命令:</div>
              <div className="font-['Noto_Sans_CJK_SC',sans-serif]">指定对</div>
            </div>
            <div className="flex w-[14px] shrink-0 flex-col items-center bg-[#3a444e] pt-[6px]">
              <svg width="10" height="8" viewBox="0 0 10 8"><path d="M1 6l4-4 4 4" fill="none" stroke="#7f8992" strokeWidth="1.300" /></svg>
              <span className="mt-[5px] h-[6px] w-[12px] bg-[#6b757f]" />
              <svg width="10" height="8" viewBox="0 0 10 8" className="mt-[5px]"><path d="M1 2l4 4 4-4" fill="none" stroke="#7f8992" strokeWidth="1.300" /></svg>
            </div>
          </div>
          <div className="flex h-[24px] items-center text-[15px] text-[#9aa3ab]">
            <span className="font-['Noto_Sans_CJK_SC',sans-serif]">命令:</span>
            <span className="ml-[12px] font-['Liberation_Mono',monospace] text-[12.500px] font-bold">pdfi</span>
          </div>
        </div>
      </div>

      <div className="absolute left-[202px] top-[418px] h-[38px] w-[1px] bg-[#d8d8d8]" />
      <div className="absolute left-[168px] top-[452px] h-[1px] w-[68px] bg-[#d8d8d8]" />
      <div className="absolute left-[197px] top-[447px] h-[10px] w-[10px] rounded-[2px] border border-[#bbb]" />

      <div className="absolute left-[75px] top-[460px] h-[62px] w-[117px] border-2 border-[#3f7fdc] bg-white pl-[1px] font-['Liberation_Mono',monospace] text-[10px] leading-[11.700px] text-[#222]">
        <div className="-ml-[1px] bg-[#1084e8] pl-[1px] text-[#eaf6ff]">PDFIMPORT</div>
        <div>PDFIMPORTFILTER</div>
        <div>PDFIMPORTIMAGEPATH</div>
        <div>PDFIMPORTLAYERS</div>
        <div>PDFIMPORTMODE</div>
      </div>

      <div className="absolute left-[7px] top-[448px] h-[103px] w-[213px] rounded-[2px] border-[3px] border-[#d8281f]" />
    </div>
  );
}

function LeftStrip() {
  return (
    <div className="relative h-full w-[7px] shrink-0 overflow-hidden bg-[#0b1c34] text-[11px] leading-[14px] text-[#d8dde2]">
      <div className="absolute left-0 top-[4px] h-[27px] w-[7px] bg-[#4a86b8]" />
      <div className="absolute left-[1px] top-[12px] h-[10px] w-[3px] bg-[#e8eef2]" />
      <span className="absolute left-[-5px] top-[49px]">回</span>
      <div className="absolute left-0 top-[94px] h-[22px] w-[7px] bg-[#2a8a62]" />
      <div className="absolute left-0 top-[117px] h-[11px] w-[7px] bg-[#cfe6da]" />
      <span className="absolute left-[-1px] top-[148px]">t</span>
      <span className="absolute left-[-3px] top-[163px]">8</span>
      <div className="absolute left-0 top-[202px] h-[18px] w-[7px] bg-[#d0413c]" />
      <div className="absolute left-0 top-[222px] h-[5px] w-[7px] bg-[#f0f0f0]" />
      <div className="absolute left-0 top-[228px] h-[5px] w-[7px] bg-[#d0413c]" />
      <span className="absolute left-[-1px] top-[233px]">c</span>
      <div className="absolute left-0 top-[294px] h-[43px] w-[7px] bg-[#e8c31a]" />
      <div className="absolute left-0 top-[322px] h-[10px] w-[5px] bg-[#2a8a3a]" />
      <span className="absolute left-[-3px] top-[343px]">C</span>
      <div className="absolute left-0 top-[388px] h-[47px] w-[7px] bg-[#e89035]" />
      <span className="absolute left-[-3px] top-[442px]">S</span>
      <div className="absolute left-[4px] top-[491px] h-[20px] w-[3px] bg-[#3a9be0]" />
      <div className="absolute left-0 top-[520px] h-[17px] w-[7px] bg-[#93a0ac]" />
      <span className="absolute left-[-5px] top-[552px]">比</span>
      <div className="absolute left-0 top-[584px] h-[44px] w-[7px] bg-[#e45a90]" />
      <span className="absolute left-[-6px] top-[633px]">吧</span>
    </div>
  );
}

function RightStrip() {
  return (
    <div className="flex h-full w-[7px] shrink-0 flex-col">
      <div className="h-[50px] bg-[#17283e]" />
      <div className="relative h-[596px] overflow-hidden bg-[#ececec] font-['Liberation_Sans',sans-serif] leading-[14px] text-[#444]">
        <span className="absolute left-0 top-[91px] text-[15px] font-bold text-[#111]">b</span>
        <span className="absolute left-0 top-[112px] text-[10px]">2</span>
        <span className="absolute left-0 top-[181px] text-[11px]">A</span>
        <span className="absolute left-0 top-[231px] text-[11px]">S</span>
        <span className="absolute left-0 top-[284px] text-[11px]">O</span>
        <span className="absolute left-0 top-[319px] text-[11px]">O</span>
        <span className="absolute left-0 top-[352px] text-[11px]">O</span>
        <span className="absolute left-0 top-[388px] h-[10px] w-[8px] border border-[#555]" />
      </div>
      <div className="flex-1 bg-[#112240]" />
    </div>
  );
}

export default function App() {
  return (
    <div className="flex h-[704px] w-[1080px] overflow-hidden bg-[#0c1c36] font-['Noto_Sans_CJK_SC','Noto_Sans',sans-serif]">
      <LeftStrip />
      <div className="flex h-[696px] w-[1066px] shrink-0 flex-col bg-[#2f3a45]">
        <div className="mt-[1px] flex h-[29px] shrink-0 items-center bg-white pl-[9px]">
          <svg width="16" height="12" viewBox="0 0 16 12" className="shrink-0"><path d="M0 4l4 2 3-6 2 3 3-3 4 2v9l-8 1-8-1z" fill="#e8413a" /></svg>
          <span className="ml-[5px] font-['Open_Sans','Noto_Sans',sans-serif] text-[12.500px] text-[#333]">KolidaMap - [Drawing1.dwg]</span>
          <div className="ml-auto flex items-center pr-[18px]">
            <span className="h-[1px] w-[10px] bg-[#333]" />
            <span className="ml-[33px] h-[10px] w-[10px] border border-[#333]" />
            <svg width="11" height="11" viewBox="0 0 11 11" className="ml-[34px]"><path d="M.5.5l10 10M10.500.5l-10 10" stroke="#333" /></svg>
          </div>
        </div>
        <div className="flex h-[38px] shrink-0 flex-col pl-[8px] text-[12px] leading-[19px] text-[#d9dee2]">
          <div className="flex gap-[13.100px]">
            {menu.map(([t, k]) => (
              <M key={k} t={t} k={k} />
            ))}
          </div>
          <M t="云协同" k="X" />
        </div>
        <div className="h-[1px] shrink-0 bg-[#c5cdd3]" />
        <div className="flex h-[27px] shrink-0">
          <div className="flex w-[597px] items-center bg-[#3b4855] pb-[2px] pl-[1px]">
            <Grip />
            <Tools list={["newf", "folder", "save", "|", "print", "frame", "print2", "|", "cut", "copy", "paste", "brush", "match"]} />
            <span className="ml-[6px] flex h-[24px] items-center bg-[#2c3640]">
              <Tool n="undo" />
              <svg width="10" height="20" viewBox="0 0 10 20"><path d="M1 8h8l-4 5z" fill={W} /></svg>
              <span className="ml-[2px]"><svg width="18" height="18" viewBox="0 0 20 20">{icons.redo}</svg></span>
              <svg width="10" height="20" viewBox="0 0 10 20"><path d="M1 8h8l-4 5z" fill={W} /></svg>
            </span>
            <Sep />
            <Tools list={["hand", "clockz", "rectz", "starz", "|", "calc1", "table", "sheet", "calc2", "|", "help"]} />
          </div>
        </div>
        <div className="flex h-[28px] shrink-0">
          <div className="flex w-[924px] items-center bg-[#3b4855] pb-[3px] pl-[1px]">
            <Grip />
            <Tools list={["layers1", "layers2", "|"]} />
            <div className="flex h-[24px] w-[294px] shrink-0 items-center bg-[#262f38] pl-[1px] text-[11px] text-[#e8e8e8]">
              <span className="flex w-[18px] justify-center"><I n="bulb" s={18} /></span>
              <span className="flex w-[18px] justify-center"><I n="sun" s={17} /></span>
              <span className="flex w-[18px] justify-center"><I n="newbox" s={17} /></span>
              <span className="flex w-[18px] justify-center"><I n="lock" s={18} /></span>
              <span className="ml-[1px] h-[12px] w-[12px] bg-white" />
              <span className="ml-[5px] font-['Liberation_Sans',sans-serif]">0</span>
              <svg width="10" height="6" viewBox="0 0 10 6" className="ml-auto mr-[5px]"><path d="M1 0h8L5 5z" fill="#f2f2f2" /></svg>
            </div>
            <Sep />
            <Tools list={["lines", "|", "folder", "save", "|", "slashy", "hand", "zoom", "rectz", "xz", "starz", "qcloud", "|", "calc1", "table", "|", "eraser", "move", "copyp", "ext1", "ext2", "|", "qdoc", "|", "|", "qcloud", "qcloud", "gear"]} />
          </div>
        </div>
        <div className="flex h-[548px] shrink-0 pl-[3px]">
          <LeftPanel />
          <Center />
          <RightPanel />
        </div>
        <div className="flex h-[24px] shrink-0 items-center bg-[#2f3a45] pl-[13px]">
          {[["gridb", 0], ["gridt", 0], ["ortho", 0], ["polar", 0], ["osnap", 1], ["track", 1], ["dyn", 0], ["plusb", 0], ["lw", 1], ["tp", 1], ["sel", 0], ["book", 1]].map(([n, on], i) => (
            <span key={i} className={`mr-[3.700px] flex h-[20px] w-[20px] shrink-0 items-center justify-center ${on ? "border border-[#4a90c8] bg-[#2f6ea8]" : ""}`}>
              <I n={n as string} s={on ? 17 : 19} />
            </span>
          ))}
          <div className="ml-auto flex items-center text-[12px] text-[#7f8a94]">
            <svg width="18" height="16" viewBox="0 0 18 16" className="shrink-0"><rect x=".5" y=".5" width="17" height="15" fill="none" stroke="#4f9bd8" /><text x="9" y="12" fontSize="9" textAnchor="middle" fill="#4f9bd8" fontFamily="Liberation Mono">0.0</text></svg>
            <span className="ml-[2px]">无单位</span>
            <svg width="10" height="6" viewBox="0 0 10 6" className="ml-[4px]"><path d="M1 0h8L5 5z" fill="#dfe5ea" /></svg>
            <span className="ml-[7px]"><I n="plane" s={18} /></span>
            <span className="ml-[1px] font-['Liberation_Mono',monospace] text-[10px]">1:1</span>
            <svg width="10" height="6" viewBox="0 0 10 6" className="ml-[4px]"><path d="M1 0h8L5 5z" fill="#dfe5ea" /></svg>
            <span className="ml-[7px]"><I n="planeb" /></span>
            <span className="ml-[4px]"><I n="planex" /></span>
            <span className="ml-[3px]"><I n="wsp" /></span>
            <span className="ml-[1px]"><I n="cog" /></span>
            <span className="ml-[2px]"><I n="clean" /></span>
            <span className="ml-[1px]"><I n="burger" /></span>
            <svg width="14" height="14" viewBox="0 0 14 14" className="ml-[6px]" stroke="#9aa5ae"><path d="M0 14L14 0M5 14l9-9M10 14l4-4" /></svg>
          </div>
        </div>
      </div>
      <RightStrip />
    </div>
  );
}
